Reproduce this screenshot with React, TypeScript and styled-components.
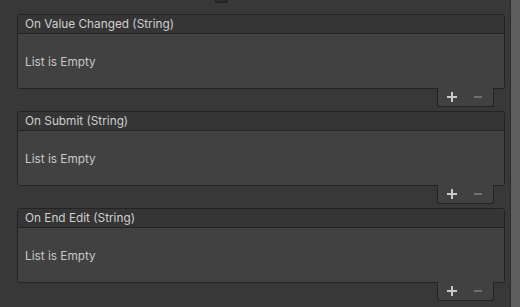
import styled, { createGlobalStyle } from "styled-components";

const GlobalStyle = createGlobalStyle`
  html, body {
    margin: 0;
    padding: 0;
    background: #383838;
  }
  body {
    font-family: Inter, "Noto Sans", "Liberation Sans", sans-serif;
  }
`;

const events = [
  "On Value Changed (String)",
  "On Submit (String)",
  "On End Edit (String)",
];

const PlusIcon = () => (
  <svg width="10" height="10" viewBox="0 0 10 10">
    <rect x="4" y="0" width="2" height="10" fill="#c9c9c9" />
    <rect x="0" y="4" width="10" height="2" fill="#c9c9c9" />
  </svg>
);

const MinusIcon = () => (
  <svg width="10" height="10" viewBox="0 0 10 10">
    <rect x="1" y="4" width="8" height="2" fill="#6f6f6f" />
  </svg>
);

const App = () => {
  return (
    <>
      <GlobalStyle />
      <Window>
        <Content>
          <TopRow>
            <ToggleBox />
          </TopRow>
          {events.map((name) => (
            <EventBlock key={name}>
              <Panel>
                <Header>{name}</Header>
                <Body>List is Empty</Body>
              </Panel>
              <Footer>
                <FooterButton>
                  <PlusIcon />
                </FooterButton>
                <FooterButton>
                  <MinusIcon />
                </FooterButton>
              </Footer>
            </EventBlock>
          ))}
        </Content>
        <ScrollBar />
      </Window>
    </>
  );
};

const Window = styled.div`
  display: flex;
  width: 520px;
  height: 307px;
  overflow: hidden;
  background: #383838;
`;

const Content = styled.div`
  flex: 1;
  display: flex;
  flex-direction: column;
  padding: 0 5px 0 17px;
`;

const TopRow = styled.div`
  height: 3px;
  margin-bottom: 11px;
  overflow: hidden;
  display: flex;
`;

const ToggleBox = styled.div`
  width: 11px;
  height: 11px;
  margin: -10px 0 0 198px;
  background: #2a2a2a;
  border: 1px solid #212121;
  border-radius: 2px;
`;

const EventBlock = styled.div`
  display: flex;
  flex-direction: column;
  margin-bottom: 4px;
`;

const Panel = styled.div`
  display: flex;
  flex-direction: column;
  border: 1px solid #232323;
  border-radius: 3px;
  overflow: hidden;
`;

const Header = styled.div`
  height: 18px;
  display: flex;
  align-items: center;
  padding-left: 7px;
  background: #353535;
  border-bottom: 1px solid #242424;
  color: #cfcfcf;
  font-size: 11.8px;
  line-height: 18px;
`;

const Body = styled.div`
  height: 54px;
  display: flex;
  align-items: center;
  padding-left: 7px;
  padding-top: 2px;
  box-sizing: border-box;
  background: #414141;
  color: #c8c8c8;
  font-size: 11.8px;
`;

const Footer = styled.div`
  position: relative;
  align-self: flex-end;
  width: 57px;
  height: 19px;
  box-sizing: border-box;
  margin: -1px 11px 0 0;
  padding-left: 2px;
  display: flex;
  align-items: center;
  gap: 2px;
  background: #414141;
  border: 1px solid #232323;
  border-top: none;
  border-radius: 0 0 3px 3px;
`;

const FooterButton = styled.div`
  width: 24px;
  height: 18px;
  display: flex;
  align-items: center;
  justify-content: center;
`;

const ScrollBar = styled.div`
  width: 9px;
  flex-shrink: 0;
  background: #5e5e5e;
  border-left: 1px solid #2c2c2c;
`;

export default App;
